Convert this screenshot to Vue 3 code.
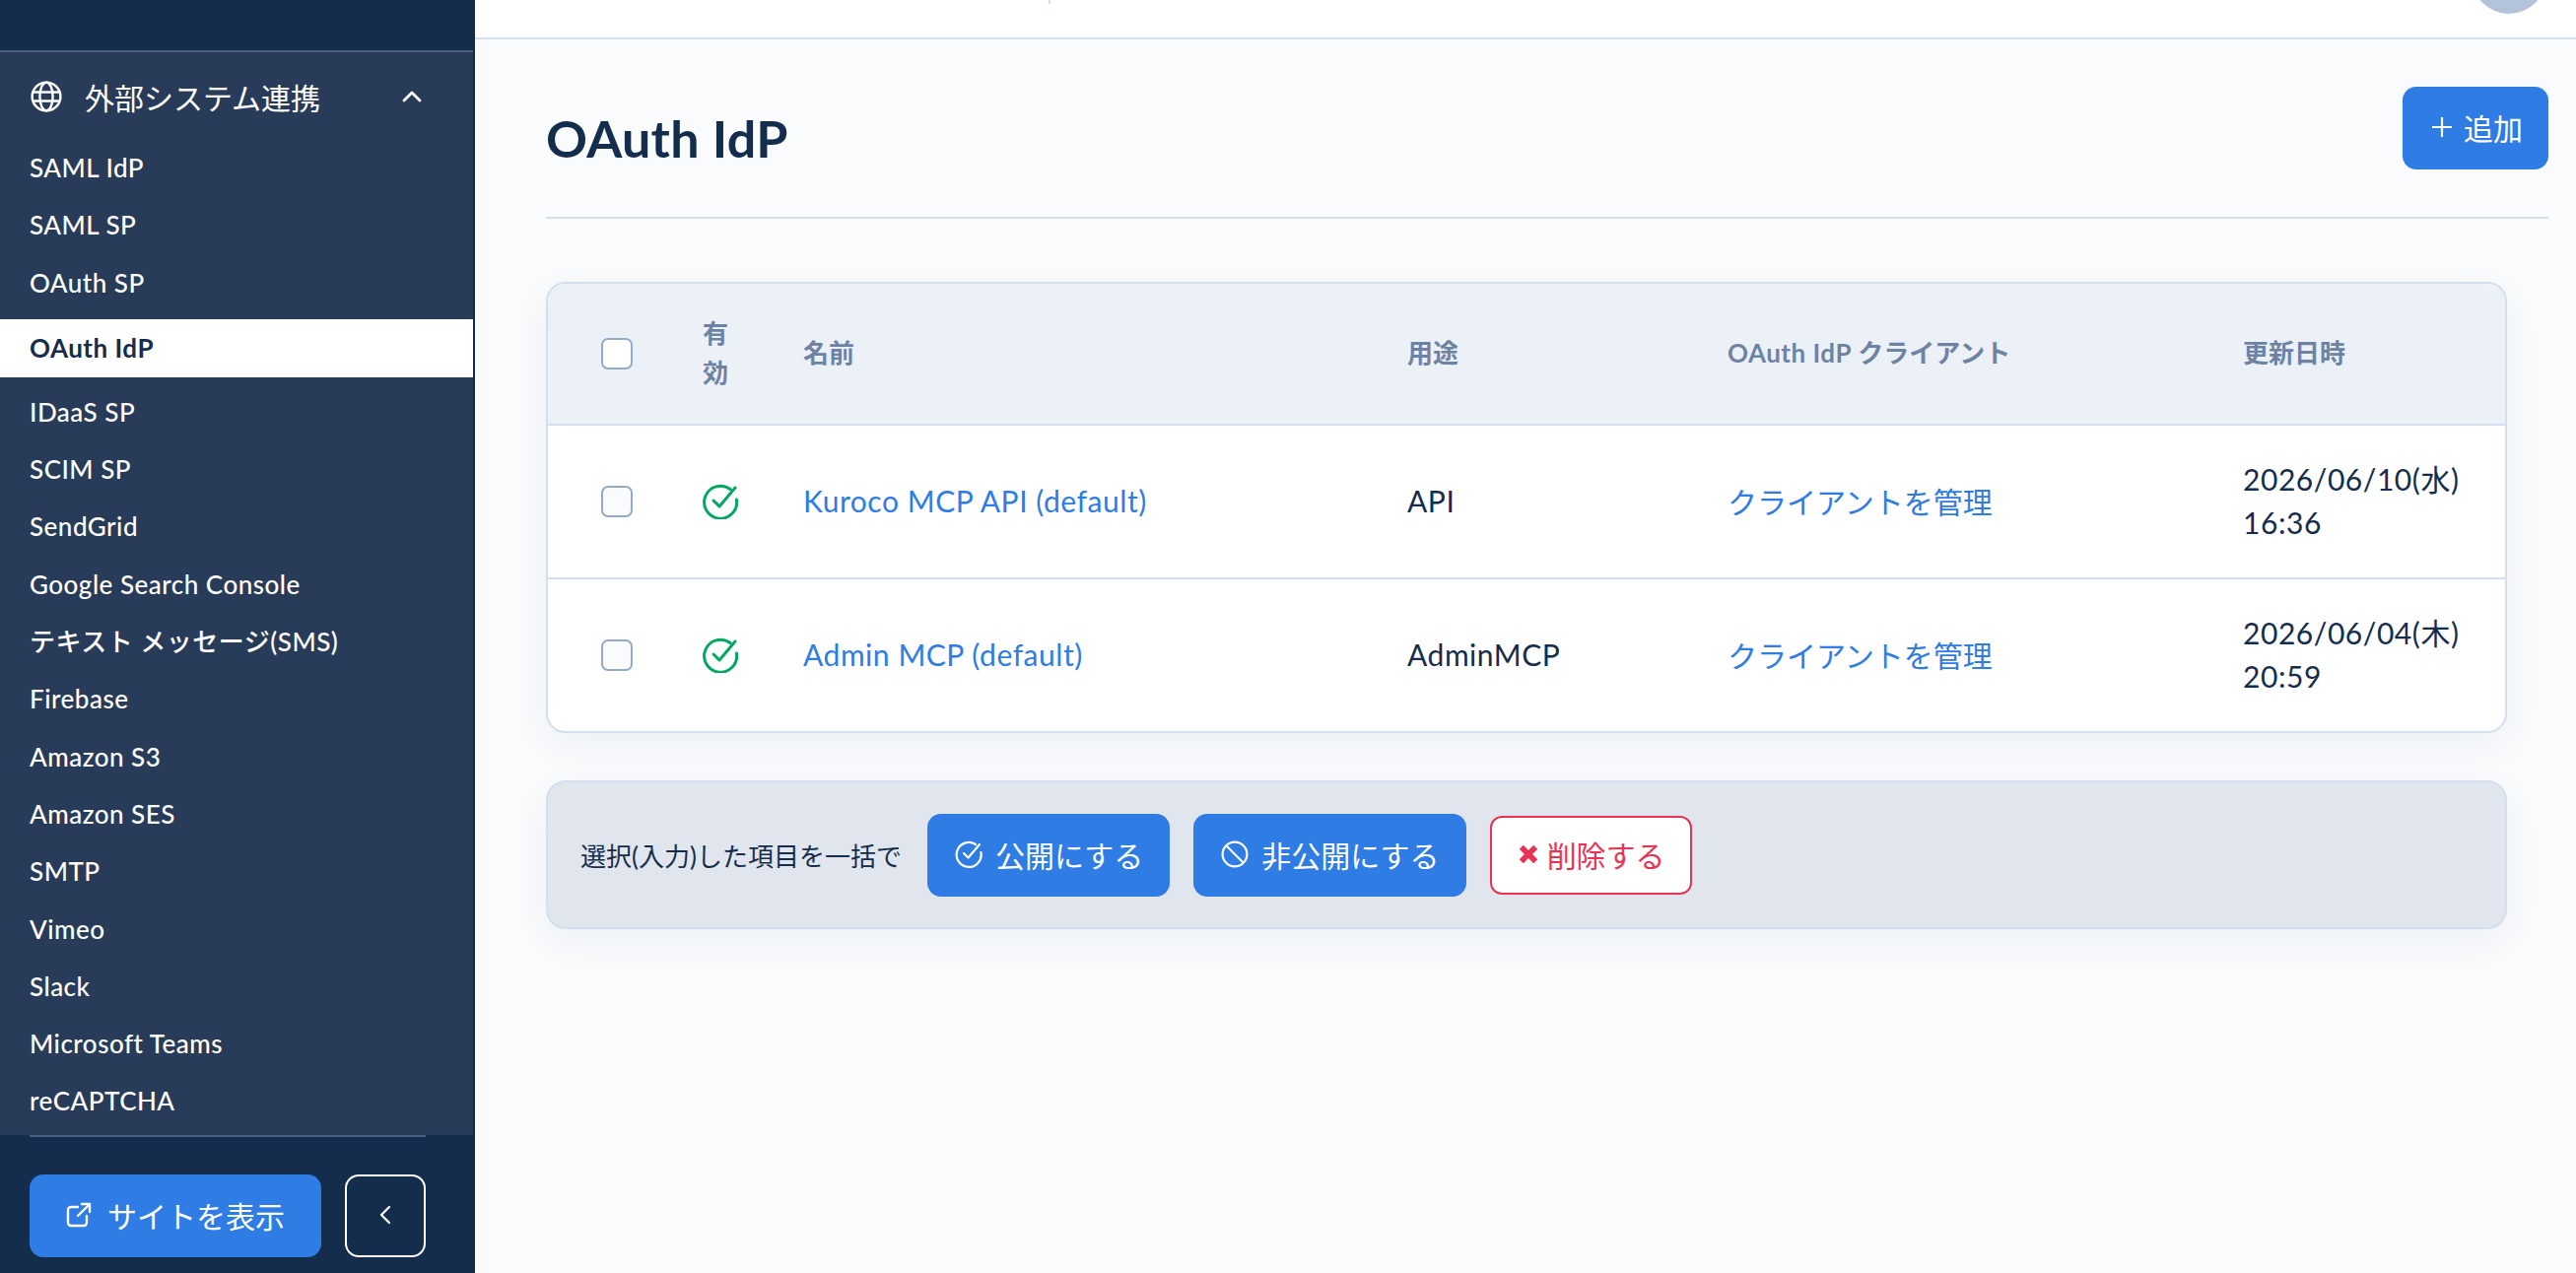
<template>
  <div class="page">
    <aside class="side">
      <div class="side-top"></div>
      <nav class="menu">
        <div class="menu-head">
          <svg class="globe" viewBox="0 0 32 32" fill="none" stroke="currentColor" stroke-width="2.4">
            <circle cx="16" cy="16" r="14.4" />
            <ellipse cx="16" cy="16" rx="6.6" ry="14.4" />
            <path d="M2 11.5h28M2 20.5h28" />
          </svg>
          <span class="menu-title">外部システム連携</span>
          <svg class="chev" viewBox="0 0 20 12" fill="none" stroke="currentColor" stroke-width="2.8" stroke-linecap="round" stroke-linejoin="round">
            <path d="M2 10l8-8 8 8" />
          </svg>
        </div>
        <a v-for="item in menuItems" :key="item" class="menu-item" :class="{ active: item === 'OAuth IdP' }">{{ item }}</a>
      </nav>
      <div class="side-foot">
        <button class="btn site-btn">
          <svg class="ext" viewBox="0 0 26 26" fill="none" stroke="currentColor" stroke-width="2.4" stroke-linecap="round" stroke-linejoin="round">
            <path d="M12 5H5a3 3 0 0 0-3 3v13a3 3 0 0 0 3 3h13a3 3 0 0 0 3-3v-7" />
            <path d="M12 14L24 2M16 2h8v8" />
          </svg>
          サイトを表示
        </button>
        <button class="collapse">
          <svg viewBox="0 0 12 20" fill="none" stroke="currentColor" stroke-width="2.2" stroke-linecap="round" stroke-linejoin="round">
            <path d="M10 2l-8 8 8 8" />
          </svg>
        </button>
      </div>
    </aside>

    <div class="main">
      <header class="topbar">
        <div class="tick"></div>
        <div class="avatar"></div>
      </header>
      <section class="content">
        <div class="title-row">
          <h1>OAuth IdP</h1>
          <button class="btn add-btn">
            <svg viewBox="0 0 20 20" fill="none" stroke="currentColor" stroke-width="2.2">
              <path d="M10 0v20M0 10h20" />
            </svg>
            追加
          </button>
        </div>

        <div class="table-card">
          <table>
            <colgroup>
              <col class="c-check" />
              <col class="c-on" />
              <col class="c-name" />
              <col class="c-use" />
              <col class="c-client" />
              <col />
            </colgroup>
            <thead>
              <tr>
                <th class="check-cell"><span class="check head-check"></span></th>
                <th class="on-head">有効</th>
                <th>名前</th>
                <th>用途</th>
                <th><span class="latin-head">OAuth IdP</span> クライアント</th>
                <th>更新日時</th>
              </tr>
            </thead>
            <tbody>
              <tr v-for="row in rows" :key="row.name">
                <td class="check-cell"><span class="check"></span></td>
                <td>
                  <svg class="ok" viewBox="0 0 36 36" fill="none" stroke="#00a862" stroke-width="3" stroke-linecap="round" stroke-linejoin="round">
                    <path d="M28 5.5A16.5 16.5 0 1 0 34.4 16" />
                    <path d="M11 17l6 6L33 4" />
                  </svg>
                </td>
                <td><a class="link latin">{{ row.name }}</a></td>
                <td class="latin">{{ row.use }}</td>
                <td><a class="link">クライアントを管理</a></td>
                <td class="date latin">{{ row.date }}<br />{{ row.time }}</td>
              </tr>
            </tbody>
          </table>
        </div>

        <div class="bulk">
          <span class="bulk-label">選択(入力)した項目を一括で</span>
          <button class="btn bulk-btn">
            <svg viewBox="0 0 28 28" fill="none" stroke="currentColor" stroke-width="2.2" stroke-linecap="round" stroke-linejoin="round">
              <path d="M21 4A12.5 12.5 0 1 0 26.4 12" />
              <path d="M9 13l4.5 4.5L25 4" />
            </svg>
            公開にする
          </button>
          <button class="btn bulk-btn">
            <svg viewBox="0 0 28 28" fill="none" stroke="currentColor" stroke-width="2.2">
              <circle cx="14" cy="14" r="12.4" />
              <path d="M5.5 5.5l17 17" />
            </svg>
            非公開にする
          </button>
          <button class="del-btn">
            <svg viewBox="0 0 20 20" fill="currentColor">
              <path d="M5.3 1.6L10 6.3l4.7-4.7 3.7 3.7L13.7 10l4.7 4.7-3.7 3.7L10 13.7l-4.7 4.7-3.7-3.7L6.3 10 1.6 5.3z" />
            </svg>
            削除する
          </button>
        </div>
      </section>
    </div>
  </div>
</template>

<script setup>
const menuItems = [
  'SAML IdP',
  'SAML SP',
  'OAuth SP',
  'OAuth IdP',
  'IDaaS SP',
  'SCIM SP',
  'SendGrid',
  'Google Search Console',
  'テキスト メッセージ(SMS)',
  'Firebase',
  'Amazon S3',
  'Amazon SES',
  'SMTP',
  'Vimeo',
  'Slack',
  'Microsoft Teams',
  'reCAPTCHA'
]

const rows = [
  { name: 'Kuroco MCP API (default)', use: 'API', date: '2026/06/10(水)', time: '16:36' },
  { name: 'Admin MCP (default)', use: 'AdminMCP', date: '2026/06/04(木)', time: '20:59' }
]
</script>

<style>
html,
body {
  margin: 0;
  overflow: hidden;
  background: #f9fbfd;
}
</style>

<style scoped>
.page {
  display: flex;
  height: 1292px;
  font-family: Lato, "Noto Sans CJK JP", sans-serif;
  color: #152d4d;
  background: #f9fbfd;
}
.side {
  width: 482px;
  flex: none;
  display: flex;
  flex-direction: column;
  background: #152d4d;
}
.side-top {
  height: 51px;
}
.menu {
  width: 480px;
  height: 1101px;
  box-sizing: border-box;
  background: #283c59;
  border-top: 2px solid #4a5f7a;
  color: #fff;
}
.menu-head {
  display: flex;
  align-items: center;
  height: 82px;
  padding: 4px 52px 2px 31px;
}
.globe {
  width: 32px;
  height: 32px;
}
.menu-title {
  margin-left: 23px;
  font-size: 30px;
}
.chev {
  width: 20px;
  height: 12px;
  margin-left: auto;
}
.menu-item {
  display: block;
  height: 58.3px;
  line-height: 58.3px;
  padding-left: 30px;
  font-size: 26px;
  font-weight: 500;
  letter-spacing: 0.5px;
}
.menu-item.active {
  height: 59px;
  line-height: 59px;
  margin: 8px 0 6px;
  background: #fff;
  color: #152d4d;
  font-weight: 700;
}
.side-foot {
  display: flex;
  gap: 24px;
  margin: 0 50px 0 30px;
  padding-top: 38px;
  border-top: 2px solid #4a5f7a;
}
.btn {
  display: inline-flex;
  align-items: center;
  justify-content: center;
  padding: 0 0 2px;
  border: none;
  border-radius: 14px;
  background: #2e7ce4;
  color: #fff;
  font-family: inherit;
  font-size: 30px;
}
.site-btn {
  width: 296px;
  height: 84px;
  gap: 16px;
}
.ext {
  width: 26px;
  height: 26px;
}
.collapse {
  width: 82px;
  height: 84px;
  padding: 0;
  border: 2px solid #fff;
  border-radius: 14px;
  background: transparent;
  color: #fff;
}
.collapse svg {
  width: 12px;
  height: 20px;
}
.main {
  flex: 1;
  min-width: 0;
}
.topbar {
  position: relative;
  height: 38px;
  background: #fff;
  border-bottom: 2px solid #d3dfec;
}
.tick {
  position: absolute;
  left: 582px;
  top: 0;
  width: 2px;
  height: 4px;
  background: #d3dfec;
}
.avatar {
  position: absolute;
  right: 30px;
  top: -62px;
  width: 76px;
  height: 76px;
  border-radius: 50%;
  background: #b3c3da;
}
.content {
  padding: 48px 28px 0 72px;
}
.title-row {
  display: flex;
  align-items: center;
  justify-content: space-between;
  margin-bottom: 64px;
  padding-bottom: 48px;
  border-bottom: 2px solid #d3dfec;
}
h1 {
  margin: 20px 0 0;
  font-size: 52px;
  font-weight: 700;
  letter-spacing: 0.3px;
  color: #152d4d;
}
.add-btn {
  width: 148px;
  height: 84px;
  padding: 0 0 2px 4px;
  gap: 12px;
}
.add-btn svg {
  width: 20px;
  height: 20px;
}
.table-card {
  margin-right: 42px;
  border: 2px solid #d3dfec;
  border-radius: 20px;
  overflow: hidden;
  background: #fff;
  box-shadow: 0 12px 40px rgba(21, 45, 77, 0.05);
}
table {
  width: 100%;
  table-layout: fixed;
  border-collapse: collapse;
  font-size: 30px;
}
.c-check {
  width: 157px;
}
.c-on {
  width: 102px;
}
.c-name {
  width: 613px;
}
.c-use {
  width: 325px;
}
.c-client {
  width: 523px;
}
th {
  height: 139px;
  padding: 0 0 3px;
  background: #ecf1f8;
  border-bottom: 2px solid #d3dfec;
  text-align: left;
  font-size: 26px;
  line-height: 40px;
  font-weight: 700;
  color: #6e83a3;
}
th.on-head {
  padding-right: 62px;
}
.latin-head {
  letter-spacing: 0.5px;
}
td {
  height: 151px;
  padding: 0 0 3px;
  color: #152d4d;
}
.latin {
  letter-spacing: 0.55px;
}
tbody tr + tr td {
  border-top: 2px solid #d3dfec;
}
.check-cell {
  padding-left: 54px;
}
.check {
  display: block;
  width: 32px;
  height: 32px;
  margin-top: 3px;
  box-sizing: border-box;
  border: 2px solid #95a9c8;
  border-radius: 7px;
  background: #f9fbfd;
}
.head-check {
  background: #fff;
}
.ok {
  display: block;
  width: 36px;
  height: 36px;
  margin-top: 2px;
}
.link {
  color: #2e7ce4;
}
.date {
  line-height: 44px;
}
.bulk {
  display: flex;
  align-items: center;
  height: 151px;
  box-sizing: border-box;
  margin: 48px 42px 0 0;
  padding-left: 33px;
  border: 2px solid #d3dfec;
  border-radius: 20px;
  background: #e1e6ee;
  box-shadow: 0 12px 40px rgba(21, 45, 77, 0.05);
}
.bulk-label {
  width: 352px;
  font-size: 26px;
}
.bulk-btn {
  height: 84px;
  margin-right: 24px;
  padding: 0 27px 2px 28px;
  gap: 13px;
  white-space: nowrap;
}
.bulk-btn svg {
  width: 28px;
  height: 28px;
}
.del-btn {
  display: inline-flex;
  align-items: center;
  gap: 8px;
  height: 80px;
  padding: 0 25px 2px 26px;
  border: 2px solid #e83355;
  border-radius: 12px;
  background: #fff;
  color: #e83355;
  font-family: inherit;
  font-size: 30px;
}
.del-btn svg {
  width: 22px;
  height: 22px;
}
</style>
